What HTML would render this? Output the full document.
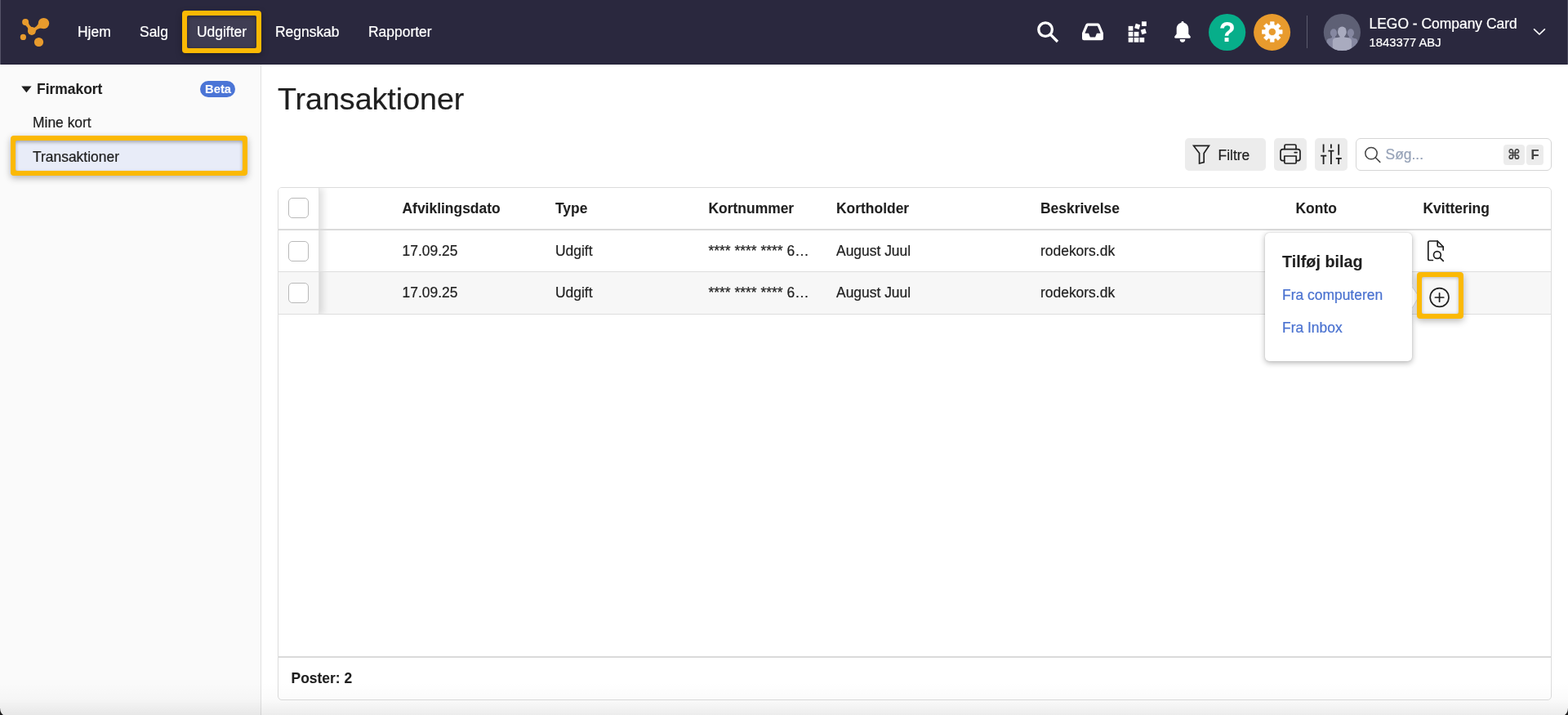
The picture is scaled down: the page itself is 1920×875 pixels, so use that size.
<!DOCTYPE html>
<html lang="da">
<head>
<meta charset="utf-8">
<title>Transaktioner</title>
<style>
*{box-sizing:border-box;margin:0;padding:0}
html,body{width:1920px;height:875px;overflow:hidden;background:#fff}
body{will-change:transform;-webkit-text-stroke:0.22px currentColor;font-family:"Liberation Sans",Arial,Helvetica,sans-serif;font-size:17.45px;color:#1f1f1f;position:relative}
.abs{position:absolute}
.t{position:absolute;white-space:nowrap;line-height:20px}
#nav{position:absolute;left:0;top:0;width:1920px;height:79px;background:linear-gradient(to bottom,#2a283e 0,#2a283e 78px,#211f35 78px,#211f35 79px)}
#nav .t{color:#fff}
#side{position:absolute;left:0;top:79px;width:320px;height:796px;background:#fafafa;border-right:1px solid #e1e1e1}
.hl{position:absolute;border:6px solid #fbb904;background:#fbb904;border-radius:4px;box-shadow:0 3px 8px rgba(0,0,0,.28)}
.hl i{position:absolute;left:0;top:0;right:0;bottom:0;border-radius:2px;display:block}
.btn{position:absolute;top:169px;height:40px;background:#ececec;border-radius:5px}
.b{font-weight:700;-webkit-text-stroke:0.1px currentColor}
#tbl{position:absolute;left:340px;top:229px;width:1560px;height:628px;border:1px solid #dcdcdc;border-radius:5px;background:#fff;overflow:hidden}
.cb{position:absolute;left:353px;width:25px;height:25px;border:1px solid #b9b9b9;border-radius:5px;background:#fff}
.ln{position:absolute;left:341px;width:1558px;background:#dedede}
</style>
</head>
<body>
<!-- NAVBAR -->
<div id="nav">
  <svg class="abs" style="left:20px;top:16px" width="48" height="48" viewBox="20 16 48 48">
    <g fill="#e89b2d">
      <circle cx="31.1" cy="27" r="4"/>
      <circle cx="53.5" cy="28.6" r="6.7"/>
      <circle cx="38.9" cy="38" r="4.9"/>
      <circle cx="28.4" cy="45.4" r="3.6"/>
      <circle cx="47.5" cy="51.5" r="5.6"/>
      <path d="M34.8 26.3 Q34.95 32.34 41.7 34.9 L34.9 39.7 Q34.88 32.36 29.3 30.1Z"/>
      <path d="M37.44 34.03 Q45.37 35.42 48.85 24.4 L55.43 34.44 Q43.94 33.22 42.04 41.07Z"/>
    </g>
  </svg>
  <div class="t" style="left:95px;top:29px">Hjem</div>
  <div class="t" style="left:171px;top:29px">Salg</div>
  <div class="hl" style="left:223px;top:13px;width:97px;height:52px"><i style="background:#3f3d53;box-shadow:inset 0 1px 5px rgba(0,0,0,.4)"></i></div>
  <div class="t" style="left:241px;top:29px">Udgifter</div>
  <div class="t" style="left:337px;top:29px">Regnskab</div>
  <div class="t" style="left:451px;top:29px">Rapporter</div>
  <svg class="abs" style="left:1260px;top:0" width="660" height="79" viewBox="1260 0 660 79">
    <!-- search -->
    <circle cx="1280.1" cy="36.1" r="8.3" fill="none" stroke="#fff" stroke-width="3.3"/>
    <path d="M1286.2 42.2 L1295 51" stroke="#fff" stroke-width="3.3" fill="none"/>
    <!-- inbox -->
    <path fill="#fff" fill-rule="evenodd" d="M1331.6 28.6 H1344.4 Q1346 28.6 1346.7 30.2 L1351 40.6 V47 Q1351 49.2 1348.8 49.2 H1327.2 Q1325 49.2 1325 47 V40.6 L1329.3 30.2 Q1330 28.6 1331.6 28.6Z M1332.2 31.8 L1328.4 40.8 H1333 L1334.9 45.4 H1341.1 L1343 40.8 H1347.6 L1343.8 31.8Z"/>
    <!-- grid -->
    <g fill="#fff">
      <rect x="1381.7" y="31.9" width="5.7" height="5.7"/>
      <rect x="1381.7" y="38.9" width="5.7" height="5.7"/>
      <rect x="1388.7" y="38.9" width="5.7" height="5.7"/>
      <rect x="1381.7" y="46" width="5.7" height="5.7"/>
      <rect x="1388.7" y="46" width="5.7" height="5.7"/>
      <rect x="1395.5" y="46" width="5.7" height="5.7"/>
      <rect x="1398" y="26.3" width="5.8" height="5.7"/>
      <rect x="-2.85" y="-2.85" width="5.7" height="5.7" transform="translate(1392.7 32.4) rotate(17)"/>
      <rect x="-2.85" y="-2.85" width="5.7" height="5.7" transform="translate(1400.3 38.6) rotate(-17)"/>
    </g>
    <!-- bell -->
    <path fill="#fff" d="M1448 25.9 c-0.9 0 -1.5 0.6 -1.5 1.4 v0.5 c-3.6 0.9 -5.8 3.9 -5.8 7.7 v6 l-2.3 2.9 c-0.7 0.9 -0.1 2.3 1.1 2.3 h17 c1.2 0 1.8 -1.4 1.1 -2.3 l-2.3 -2.9 v-6 c0 -3.8 -2.2 -6.8 -5.8 -7.7 v-0.5 c0 -0.8 -0.6 -1.4 -1.5 -1.4z M1444.7 48.1 h6.6 a3.3 3.7 0 0 1 -6.6 0z"/>
    <!-- help -->
    <circle cx="1502.6" cy="39.5" r="22.6" fill="#07ae8a"/>
    <!-- gear -->
    <circle cx="1557.6" cy="39.5" r="22.5" fill="#e89b2d"/>
    <path fill="#fff" fill-rule="evenodd" stroke="#fff" stroke-width="0.7" stroke-linejoin="round" d="M1555.60 30.38 L1555.44 26.72 L1560.16 26.72 L1560.00 30.38 A8.9 8.9 0 0 1 1562.34 31.35 L1564.81 28.65 L1568.15 31.99 L1565.45 34.46 A8.9 8.9 0 0 1 1566.42 36.80 L1570.08 36.64 L1570.08 41.36 L1566.42 41.20 A8.9 8.9 0 0 1 1565.45 43.54 L1568.15 46.01 L1564.81 49.35 L1562.34 46.65 A8.9 8.9 0 0 1 1560.00 47.62 L1560.16 51.28 L1555.44 51.28 L1555.60 47.62 A8.9 8.9 0 0 1 1553.26 46.65 L1550.79 49.35 L1547.45 46.01 L1550.15 43.54 A8.9 8.9 0 0 1 1549.18 41.20 L1545.52 41.36 L1545.52 36.64 L1549.18 36.80 A8.9 8.9 0 0 1 1550.15 34.46 L1547.45 31.99 L1550.79 28.65 L1553.26 31.35 A8.9 8.9 0 0 1 1555.60 30.38Z M1562.40 39.0 a4.6 4.6 0 1 0 -9.2 0 a4.6 4.6 0 1 0 9.2 0z"/>
    <!-- divider -->
    <rect x="1600" y="19" width="1" height="40" fill="#5d5c6f"/>
    <!-- avatar -->
    <clipPath id="avc"><circle cx="1643.4" cy="39.5" r="22.6"/></clipPath>
    <circle cx="1643.4" cy="39.5" r="22.6" fill="#5e6075"/>
    <g clip-path="url(#avc)">
      <g fill="#8688a1">
        <ellipse cx="1633" cy="40.3" rx="4.1" ry="5"/>
        <path d="M1624.5 66 V51 Q1624.5 47.2 1628.5 47 L1631 46 V43 H1635 V46 L1640 47 V66Z"/>
        <ellipse cx="1653.9" cy="40.3" rx="4.1" ry="5"/>
        <path d="M1662.4 66 V51 Q1662.4 47.2 1658.4 47 L1655.9 46 V43 H1651.9 V46 L1647 47 V66Z"/>
      </g>
      <g fill="#a9abbf">
        <ellipse cx="1643.4" cy="38.9" rx="5.4" ry="6.5"/>
        <path d="M1631.8 66 V50.5 Q1631.8 46.6 1636 46.3 L1640.6 45.6 V42 H1646.2 V45.6 L1650.8 46.3 Q1655 46.6 1655 50.5 V66Z"/>
      </g>
    </g>
    <!-- chevron -->
    <path d="M1878.6 35.8 L1885 42 L1891.4 35.8" fill="none" stroke="#fff" stroke-width="1.7" stroke-linecap="round" stroke-linejoin="round"/>
  </svg>
  <div class="t b" style="left:1492.3px;top:19px;width:21px;text-align:center;font-size:35.5px;line-height:40px;transform:scaleX(.92)">?</div>
  <div class="t" style="left:1676.5px;top:19px">LEGO - Company Card</div>
  <div class="t" style="left:1676.5px;top:43px;font-size:14.8px;line-height:18px">1843377 ABJ</div>
</div>
<!-- SIDEBAR -->
<div id="side"></div>
<svg class="abs" style="left:25px;top:104px" width="16" height="10" viewBox="0 0 16 10"><path d="M1.2 1.6 H13.6 L7.4 9.2Z" fill="#1f1f1f"/></svg>
<div class="t b" style="left:45px;top:99px">Firmakort</div>
<div class="abs" style="left:245px;top:99px;width:43px;height:20px;border-radius:10px;background:#4b75d6"></div>
<div class="t b" style="left:251px;top:99px;font-size:14.8px;color:#fff">Beta</div>
<div class="t" style="left:40px;top:140px">Mine kort</div>
<div class="hl" style="left:13px;top:166px;width:290px;height:49px"><i style="background:#e8ecf8;box-shadow:inset 0 2px 4px rgba(0,0,0,.3)"></i></div>
<div class="t" style="left:40px;top:182px">Transaktioner</div>
<!-- MAIN -->
<div id="main">
<div class="t" style="left:340px;top:99px;font-size:37.6px;line-height:44px;color:#1f1f1f">Transaktioner</div>
<!-- toolbar -->
<div class="btn" style="left:1451px;width:99px"></div>
<svg class="abs" style="left:1458px;top:175px" width="26" height="28" viewBox="1458 175 26 28"><path d="M1461.6 178.4 H1480.4 L1474.2 187.6 V198.6 L1468.6 200 V187.6Z" fill="none" stroke="#1f1f1f" stroke-width="1.7" stroke-linejoin="miter"/></svg>
<div class="t" style="left:1491.5px;top:180px">Filtre</div>
<div class="btn" style="left:1560px;width:40px"></div>
<svg class="abs" style="left:1560px;top:169px" width="40" height="40" viewBox="1560 169 40 40"><g fill="none" stroke="#1f1f1f" stroke-width="1.7" stroke-linejoin="round" stroke-linecap="round"><path d="M1573 182.4 V178.6 Q1573 177 1574.6 177 H1585.4 Q1587 177 1587 178.6 V182.4"/><path d="M1572.6 196.6 H1570.6 Q1568 196.6 1568 194 V185.6 Q1568 182.6 1571 182.6 H1589 Q1592 182.6 1592 185.6 V194 Q1592 196.6 1589.4 196.6 H1587.4"/><path d="M1572.8 191 H1587.2 V198.6 Q1587.2 200 1585.8 200 H1574.2 Q1572.8 200 1572.8 198.6Z"/><path d="M1585.2 186.6 H1588"/></g></svg>
<div class="btn" style="left:1610px;width:40px"></div>
<svg class="abs" style="left:1610px;top:169px" width="40" height="40" viewBox="1610 169 40 40"><g fill="none" stroke="#1f1f1f" stroke-width="1.8"><path d="M1620.6 176.4 V186.6 M1620.6 190.6 V201 M1617.2 190.6 H1624.2"/><path d="M1629.9 176.4 V181.6 M1629.9 184.7 V201 M1626.4 184.7 H1633.4"/><path d="M1639.2 176.4 V189.8 M1639.2 193.8 V201 M1635.8 193.8 H1642.8"/></g></svg>
<div class="abs" style="left:1660px;top:169px;width:240px;height:40px;border:1px solid #d5d5d5;border-radius:6px;background:#fff"></div>
<svg class="abs" style="left:1668px;top:177px" width="26" height="26" viewBox="1668 177 26 26"><circle cx="1679" cy="187.6" r="7.2" fill="none" stroke="#444" stroke-width="1.5"/><path d="M1684.2 192.8 L1689.8 198.4" stroke="#444" stroke-width="1.5" stroke-linecap="round"/></svg>
<div class="t" style="left:1696.5px;top:179px;color:#97a3b8">Søg...</div>
<div class="abs" style="left:1841px;top:177px;width:26px;height:25px;border-radius:4px;background:#ececec"></div>
<div class="t b" style="left:1841px;top:179px;width:26px;text-align:center;font-family:'DejaVu Sans','Liberation Sans',sans-serif;font-size:17px;color:#444">⌘</div>
<div class="abs" style="left:1869px;top:177px;width:21px;height:25px;border-radius:4px;background:#ececec"></div>
<div class="t b" style="left:1869px;top:179px;width:21px;text-align:center;font-size:16.5px;color:#444">F</div>
<!-- table -->
<div id="tbl">
  <div class="abs" style="left:0;top:102px;width:1560px;height:52px;background:#f7f7f7"></div>
  <div class="abs" style="left:0;top:0;width:49px;height:155px;box-shadow:5px 0 9px rgba(0,0,0,.14);clip-path:inset(0 -30px 0 0)"></div>
  <div class="abs" style="left:0;top:0;width:49px;height:51px;background:#fff"></div>
  <div class="abs" style="left:0;top:51px;width:49px;height:51px;background:#fff"></div>
  <div class="abs" style="left:0;top:102px;width:49px;height:52px;background:#f7f7f7"></div>
  <div class="abs" style="left:49px;top:0;width:1px;height:155px;background:#e3e3e3"></div>
</div>
<div class="ln" style="top:280px;height:2px;background:#dadada"></div>
<div class="ln" style="top:332px;height:1px"></div>
<div class="ln" style="top:384px;height:1px"></div>
<div class="ln" style="top:803px;height:2px;background:#dadada"></div>
<div class="cb" style="top:242px"></div>
<div class="cb" style="top:295px"></div>
<div class="cb" style="top:346px"></div>
<div class="t b" style="left:492.5px;top:245px">Afviklingsdato</div>
<div class="t b" style="left:680px;top:245px">Type</div>
<div class="t b" style="left:867.5px;top:245px">Kortnummer</div>
<div class="t b" style="left:1024px;top:245px">Kortholder</div>
<div class="t b" style="left:1274px;top:245px">Beskrivelse</div>
<div class="t b" style="left:1586.5px;top:245px">Konto</div>
<div class="t b" style="left:1742.5px;top:245px">Kvittering</div>
<div class="t" style="left:492.5px;top:297px">17.09.25</div>
<div class="t" style="left:680px;top:297px">Udgift</div>
<div class="t" style="left:867.5px;top:297px">**** **** **** 6…</div>
<div class="t" style="left:1024px;top:297px">August Juul</div>
<div class="t" style="left:1274px;top:297px">rodekors.dk</div>
<div class="t" style="left:492.5px;top:348px">17.09.25</div>
<div class="t" style="left:680px;top:348px">Udgift</div>
<div class="t" style="left:867.5px;top:348px">**** **** **** 6…</div>
<div class="t" style="left:1024px;top:348px">August Juul</div>
<div class="t" style="left:1274px;top:348px">rodekors.dk</div>
<div class="t b" style="left:356.5px;top:820px">Poster: 2</div>
<!-- receipt icons -->
<svg class="abs" style="left:1744px;top:290px" width="30" height="34" viewBox="1744 290 30 34"><g fill="none" stroke="#1f1f1f" stroke-width="1.7" stroke-linejoin="round" stroke-linecap="round"><path d="M1754.4 318.5 H1750.6 Q1748.8 318.5 1748.8 316.7 V296.8 Q1748.8 295 1750.6 295 H1760.2 L1767.2 302 V306"/><path d="M1760.2 295 V300.4 Q1760.2 302 1761.8 302 H1767.2"/><circle cx="1759.9" cy="312" r="4.4"/><path d="M1763.2 315.3 L1767.3 319.3"/></g></svg>
<div class="abs" style="left:1549px;top:285px;width:180px;height:157px;background:#fff;border-radius:5px;box-shadow:0 2px 7px rgba(0,0,0,.3),0 0 1px rgba(0,0,0,.25)"></div>
<svg class="abs" style="left:1728px;top:348px" width="10" height="32" viewBox="0 0 10 32"><path d="M1 3 L8.5 13.5 Q9.5 15 8.5 16.5 L1 29Z" fill="#fff" stroke="rgba(0,0,0,.12)" stroke-width="1"/><rect x="0" y="0" width="1.2" height="32" fill="#fff"/></svg>
<div class="hl" style="left:1735px;top:333px;width:57px;height:57px"><i style="background:#f7f7f7;box-shadow:inset 0 1px 4px rgba(0,0,0,.25)"></i></div>
<svg class="abs" style="left:1748px;top:349px" width="30" height="30" viewBox="1748 349 30 30"><g fill="none" stroke="#1f1f1f" stroke-width="1.7" stroke-linecap="round"><circle cx="1762.6" cy="364" r="11.4"/><path d="M1757.4 364 H1767.8 M1762.6 358.8 V369.2"/></g></svg>
<!-- popup -->


<div class="t b" style="left:1570px;top:308px;font-size:19.8px;line-height:24px">Tilføj bilag</div>
<div class="t" style="left:1570px;top:351px;color:#4a72d0">Fra computeren</div>
<div class="t" style="left:1570px;top:391px;color:#4a72d0">Fra Inbox</div>
</div>
<!-- window edges -->
<div class="abs" style="left:0;top:0;width:1px;height:79px;background:#555468"></div>
<div class="abs" style="left:1919px;top:0;width:1px;height:79px;background:#4b4a5e"></div>
<div class="abs" style="left:0;top:835px;width:1920px;height:40px;background:linear-gradient(to bottom,rgba(0,0,0,0),rgba(0,0,0,.015) 50%,rgba(0,0,0,.075))"></div>
<div class="abs" style="left:0;top:867px;width:10px;height:8px;background:radial-gradient(circle at 9.5px 0.5px,rgba(20,20,20,0) 8.8px,#1c1c1c 9.8px)"></div>
<div class="abs" style="left:1910px;top:867px;width:10px;height:8px;background:radial-gradient(circle at 0.5px 0.5px,rgba(20,20,20,0) 8.8px,#1c1c1c 9.8px)"></div>
</body>
</html>
